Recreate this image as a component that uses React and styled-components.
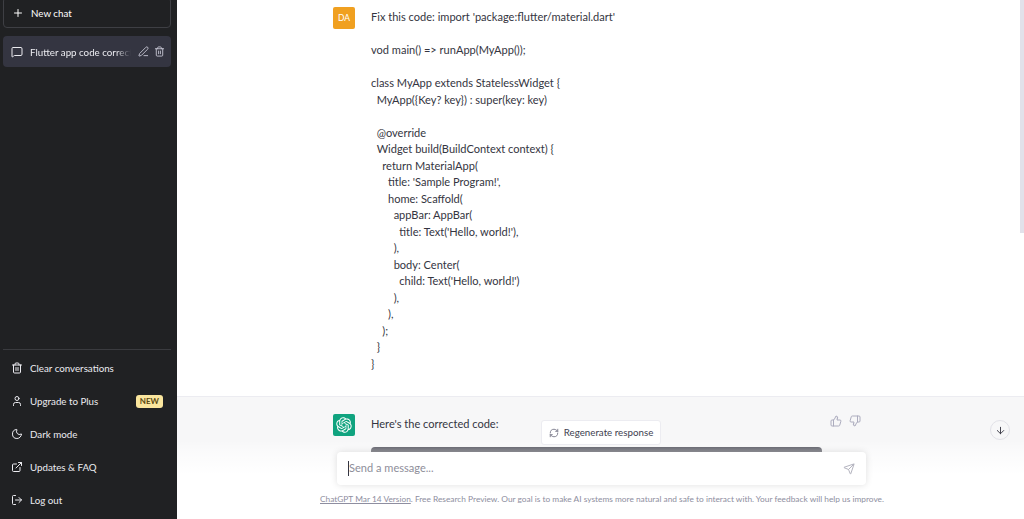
import React from "react";
import styled, { createGlobalStyle } from "styled-components";
import {
  Plus, MessageSquare, PenLine, Trash2, User, Moon, ExternalLink, LogOut,
  RefreshCw, ThumbsUp, ThumbsDown, ArrowDown, Send,
} from "lucide-react";

const Global = createGlobalStyle`
  html, body { margin: 0; padding: 0; height: 100%; overflow: hidden; }
  body { font-family: "Lato", "Open Sans", sans-serif; background: #fff; }
`;

const Page = styled.div`
  display: flex;
  width: 1024px;
  height: 519px;
  overflow: hidden;
`;

const Sidebar = styled.aside`
  width: 177px;
  flex: none;
  background: #202123;
  color: #ececf1;
  display: flex;
  flex-direction: column;
  padding: 0 6px 0 3px;
  box-sizing: border-box;
  font-size: 9.75px;
`;

const NewChat = styled.div`
  height: 31px;
  margin-top: -3px;
  flex: none;
  border: 1px solid #3e3f44;
  border-radius: 4px;
  box-sizing: border-box;
  display: flex;
  align-items: center;
  gap: 7px;
  padding: 1px 8px 0;
  color: #fff;
`;

const History = styled.div`
  flex: 1;
  padding-top: 8px;
`;

const ChatItem = styled.div`
  height: 31px;
  border-radius: 4px;
  background: #343541;
  display: flex;
  align-items: center;
  gap: 7px;
  padding: 0 6px 0 8px;
  position: relative;
`;

const ChatTitle = styled.span`
  flex: 1;
  min-width: 0;
  overflow: hidden;
  white-space: nowrap;
  -webkit-mask-image: linear-gradient(to right, #000 85%, transparent);
  mask-image: linear-gradient(to right, #000 85%, transparent);
`;

const ItemActions = styled.span`
  display: flex;
  gap: 5px;
  color: #c5c5d2;
`;

const Footer = styled.div`
  border-top: 1px solid #3a3b3f;
  padding: 2px 0 2px;
  display: flex;
  flex-direction: column;
  flex: none;
`;

const MenuItem = styled.div`
  height: 33px;
  display: flex;
  align-items: center;
  gap: 7px;
  padding: 0 8px 1px 8px;
  box-sizing: border-box;
  color: #ececf1;
`;

const MenuLabel = styled.span`
  flex: 1;
`;

const NewBadge = styled.span`
  background: #fae69e;
  color: #5c4a12;
  font-size: 8px;
  font-weight: 700;
  border-radius: 3px;
  padding: 1px 4px;
  line-height: 11px;
`;

const Main = styled.main`
  flex: 1;
  position: relative;
  overflow: hidden;
  background: #fff;
  color: #343541;
  font-size: 11.05px;
  line-height: 16.5px;
`;

const Band = styled.section`
  background: ${(p) => (p.$alt ? "#f7f7f8" : "#fff")};
  border-top: ${(p) => (p.$alt ? "1px solid #ececf1" : "none")};
  height: ${(p) => p.$h}px;
  box-sizing: border-box;
  padding-top: ${(p) => p.$top}px;
`;

const Row = styled.div`
  width: 528px;
  margin-left: 156px;
  display: flex;
  gap: 16px;
`;

const Avatar = styled.div`
  width: 22px;
  height: 22px;
  flex: none;
  border-radius: 2px;
  background: ${(p) => p.$bg};
  color: #fff;
  font-size: 8.5px;
  display: flex;
  align-items: center;
  justify-content: center;
`;

const MessageText = styled.div`
  flex: 1;
  white-space: pre-wrap;
  padding-top: 2px;
`;

const Feedback = styled.div`
  display: flex;
  gap: 7px;
  color: #acacbe;
  height: 14px;
  margin-top: 1px;
`;

const CodeBar = styled.div`
  position: absolute;
  left: 194px;
  top: 447px;
  width: 451px;
  height: 10px;
  border-radius: 4px 4px 0 0;
  background: #343541;
`;

const Composer = styled.div`
  position: absolute;
  left: 0;
  right: 0;
  bottom: 0;
  height: 79px;
  background: linear-gradient(to bottom, rgba(255,255,255,0) 0%, rgba(255,255,255,0.4) 10px, #fff 34px);
`;

const InputBox = styled.div`
  position: absolute;
  left: 160px;
  top: 12px;
  width: 529px;
  height: 33px;
  background: #fff;
  border-radius: 4px;
  box-shadow: 0 0 7px rgba(0,0,0,0.13);
  display: flex;
  align-items: center;
  padding: 0 11px;
  box-sizing: border-box;
  color: #8e8e9a;
`;

const Caret = styled.span`
  width: 1px;
  height: 15px;
  background: #343541;
  flex: none;
`;

const Placeholder = styled.span`
  flex: 1;
`;

const Regenerate = styled.div`
  position: absolute;
  left: 364px;
  top: 420px;
  width: 120px;
  height: 25px;
  background: #fff;
  border: 1px solid #ececf1;
  border-radius: 3px;
  box-sizing: border-box;
  display: flex;
  align-items: center;
  justify-content: center;
  gap: 5px;
  font-size: 9.75px;
  color: #40414f;
`;

const Disclaimer = styled.div`
  position: absolute;
  left: 143px;
  top: 53px;
  white-space: nowrap;
  font-size: 8.34px;
  line-height: 12px;
  color: #8e8ea0;
`;

const DisclaimerLink = styled.span`
  text-decoration: underline;
`;

const ScrollDown = styled.div`
  position: absolute;
  left: 813px;
  top: 420px;
  width: 18px;
  height: 18px;
  border: 1px solid #e2e2e8;
  border-radius: 50%;
  background: #f7f7f8;
  display: flex;
  align-items: center;
  justify-content: center;
  color: #343541;
`;

const ScrollThumb = styled.div`
  position: absolute;
  right: 0;
  top: 0;
  width: 4px;
  height: 233px;
  background: #e2e1ea;
`;

const code = `Fix this code: import 'package:flutter/material.dart'

vod main() => runApp(MyApp());

class MyApp extends StatelessWidget {
  MyApp({Key? key}) : super(key: key)

  @override
  Widget build(BuildContext context) {
    return MaterialApp(
      title: 'Sample Program!',
      home: Scaffold(
        appBar: AppBar(
          title: Text('Hello, world!'),
        ),
        body: Center(
          child: Text('Hello, world!')
        ),
      ),
    );
  }
}`;

const OpenAILogo = () => (
  <svg width="16" height="16" viewBox="0 0 41 41" fill="#fff">
    <path d="M37.5324 16.8707C37.9808 15.5241 38.1363 14.0974 37.9886 12.6859C37.8409 11.2744 37.3934 9.91076 36.676 8.68622C35.6126 6.83404 33.9882 5.3676 32.0373 4.4985C30.0864 3.62941 27.9098 3.40259 25.8215 3.85078C24.8796 2.7893 23.7219 1.94125 22.4257 1.36341C21.1295 0.785575 19.7249 0.491269 18.3058 0.500197C16.1708 0.495044 14.0893 1.16803 12.3614 2.42214C10.6335 3.67624 9.34853 5.44666 8.6917 7.47815C7.30085 7.76286 5.98686 8.3414 4.8377 9.17505C3.68854 10.0087 2.73073 11.0782 2.02839 12.312C0.956464 14.1591 0.498905 16.2988 0.721698 18.4228C0.944492 20.5467 1.83612 22.5449 3.268 24.1293C2.81966 25.4759 2.66413 26.9026 2.81182 28.3141C2.95951 29.7256 3.40701 31.0892 4.12437 32.3138C5.18791 34.1659 6.8123 35.6322 8.76321 36.5013C10.7141 37.3704 12.8907 37.5973 14.9789 37.1492C15.9208 38.2107 17.0786 39.0587 18.3747 39.6366C19.6709 40.2144 21.0755 40.5087 22.4946 40.4998C24.6307 40.5054 26.7133 39.8321 28.4418 38.5772C30.1704 37.3223 31.4556 35.5506 32.1119 33.5179C33.5027 33.2332 34.8167 32.6547 35.9659 31.821C37.115 30.9874 38.0728 29.9178 38.7752 28.684C39.8458 26.8371 40.3023 24.6979 40.0789 22.5748C39.8556 20.4517 38.9639 18.4544 37.5324 16.8707ZM22.4978 37.8849C20.7443 37.8874 19.0459 37.2733 17.6994 36.1501C17.7601 36.117 17.8666 36.0586 17.936 36.0161L25.9004 31.4156C26.1003 31.3019 26.2663 31.137 26.3813 30.9378C26.4964 30.7386 26.5563 30.5124 26.5549 30.2825V19.0542L29.9213 20.998C29.9389 21.0068 29.9541 21.0198 29.9656 21.0359C29.977 21.052 29.9842 21.0707 29.9867 21.0902V30.3889C29.9842 32.375 29.1946 34.2791 27.7909 35.6841C26.3872 37.0892 24.4838 37.8806 22.4978 37.8849ZM6.39227 31.0064C5.51397 29.4888 5.19742 27.7107 5.49804 25.9832C5.55718 26.0187 5.66048 26.0818 5.73461 26.1244L13.699 30.7248C13.8975 30.8408 14.1233 30.902 14.3532 30.902C14.583 30.902 14.8088 30.8408 15.0073 30.7248L24.731 25.1103V28.9979C24.7321 29.0177 24.7283 29.0376 24.7199 29.0556C24.7115 29.0736 24.6988 29.0893 24.6829 29.1012L16.6317 33.7497C14.9096 34.7416 12.8643 35.0097 10.9447 34.4954C9.02506 33.9811 7.38785 32.7263 6.39227 31.0064ZM4.29707 13.6194C5.17156 12.0998 6.55279 10.9364 8.19885 10.3327C8.19885 10.4013 8.19491 10.5228 8.19491 10.6071V19.808C8.19351 20.0378 8.25334 20.2638 8.36823 20.4629C8.48312 20.6619 8.64893 20.8267 8.84863 20.9404L18.5723 26.5542L15.206 28.4979C15.1894 28.5089 15.1703 28.5155 15.1505 28.5173C15.1307 28.5191 15.1107 28.516 15.0924 28.5082L7.04046 23.8557C5.32135 22.8601 4.06716 21.2235 3.55289 19.3046C3.03862 17.3858 3.30624 15.3413 4.29707 13.6194ZM31.955 20.0556L22.2312 14.4411L25.5976 12.4981C25.6142 12.4872 25.6333 12.4805 25.6531 12.4787C25.6729 12.4769 25.6928 12.4801 25.7111 12.4879L33.7631 17.1364C34.9967 17.849 36.0017 18.8982 36.6606 20.1613C37.3194 21.4244 37.6047 22.849 37.4832 24.2684C37.3617 25.6878 36.8382 27.0432 35.9743 28.1759C35.1103 29.3086 33.9415 30.1717 32.6047 30.6641C32.6047 30.5947 32.6047 30.4733 32.6047 30.3889V21.188C32.6066 20.9586 32.5474 20.7328 32.4332 20.5338C32.319 20.3348 32.154 20.1698 31.955 20.0556ZM35.3055 15.0128C35.2464 14.9765 35.1431 14.9142 35.069 14.8717L27.1045 10.2712C26.906 10.1554 26.6803 10.0943 26.4504 10.0943C26.2206 10.0943 25.9948 10.1554 25.7963 10.2712L16.0726 15.8858V11.9982C16.0715 11.9783 16.0753 11.9585 16.0837 11.9405C16.0921 11.9225 16.1048 11.9068 16.1207 11.8949L24.1719 7.25025C25.4053 6.53903 26.8121 6.19376 28.2303 6.25482C29.6485 6.31589 31.0207 6.78077 32.1883 7.59508C33.3559 8.40939 34.2713 9.53945 34.8281 10.8451C35.3849 12.1507 35.5592 13.5833 35.3055 15.0128ZM14.2424 21.9419L10.8752 19.9981C10.8576 19.9893 10.8423 19.9763 10.8309 19.9602C10.8195 19.9441 10.8122 19.9254 10.8098 19.9058V10.6071C10.8107 9.18295 11.2173 7.78848 11.9819 6.58696C12.7466 5.38544 13.8377 4.42659 15.1275 3.82264C16.4173 3.21869 17.8524 2.99464 19.2649 3.1767C20.6775 3.35876 22.0089 3.93941 23.1034 4.85067C23.0427 4.88379 22.937 4.94215 22.8668 4.98473L14.9024 9.58517C14.7025 9.69878 14.5366 9.86356 14.4215 10.0626C14.3065 10.2616 14.2466 10.4877 14.2479 10.7175L14.2424 21.9419ZM16.071 17.9991L20.4018 15.4978L24.7325 17.9975V22.9985L20.4018 25.4983L16.071 22.9985V17.9991Z" />
  </svg>
);

const menu = [
  { icon: Trash2, label: "Clear conversations" },
  { icon: User, label: "Upgrade to Plus", badge: "NEW" },
  { icon: Moon, label: "Dark mode" },
  { icon: ExternalLink, label: "Updates & FAQ" },
  { icon: LogOut, label: "Log out" },
];

export default function App() {
  return (
    <Page>
      <Global />
      <Sidebar>
        <NewChat>
          <Plus size={12} />
          New chat
        </NewChat>
        <History>
          <ChatItem>
            <MessageSquare size={12} />
            <ChatTitle>Flutter app code correction</ChatTitle>
            <ItemActions>
              <PenLine size={11} />
              <Trash2 size={11} />
            </ItemActions>
          </ChatItem>
        </History>
        <Footer>
          {menu.map(({ icon: Icon, label, badge }) => (
            <MenuItem key={label}>
              <Icon size={12} />
              <MenuLabel>{label}</MenuLabel>
              {badge && <NewBadge>{badge}</NewBadge>}
            </MenuItem>
          ))}
        </Footer>
      </Sidebar>
      <Main>
        <Band $h={396} $top={7}>
          <Row>
            <Avatar $bg="#f0a020">DA</Avatar>
            <MessageText>{code}</MessageText>
          </Row>
        </Band>
        <Band $alt $h={123} $top={17}>
          <Row>
            <Avatar $bg="#10a37f"><OpenAILogo /></Avatar>
            <MessageText>Here's the corrected code:</MessageText>
            <Feedback>
              <ThumbsUp size={12} />
              <ThumbsDown size={12} />
            </Feedback>
          </Row>
        </Band>
        <CodeBar />
        <Composer>
          <InputBox>
            <Caret />
            <Placeholder>Send a message...</Placeholder>
            <Send size={12} color="#b4b4bf" />
          </InputBox>
          <Disclaimer>
            <DisclaimerLink>ChatGPT Mar 14 Version</DisclaimerLink>. Free Research Preview. Our goal is to make AI systems more natural and safe to interact with. Your feedback will help us improve.
          </Disclaimer>
        </Composer>
        <Regenerate>
          <RefreshCw size={10} color="#6e6e80" />
          Regenerate response
        </Regenerate>
        <ScrollDown><ArrowDown size={11} /></ScrollDown>
        <ScrollThumb />
      </Main>
    </Page>
  );
}
